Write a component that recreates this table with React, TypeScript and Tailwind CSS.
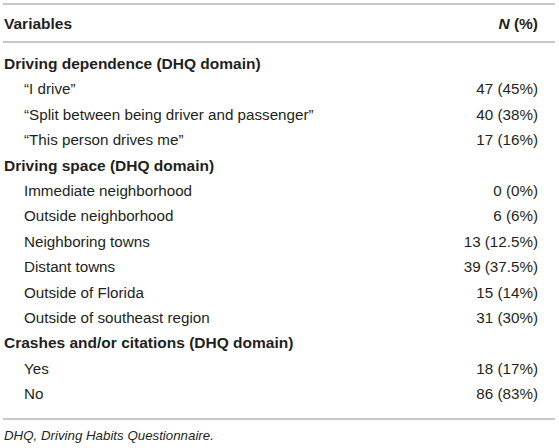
const groups = [
  {
    title: "Driving dependence (DHQ domain)",
    rows: [
      ["\u201cI drive\u201d", "47 (45%)"],
      ["\u201cSplit between being driver and passenger\u201d", "40 (38%)"],
      ["\u201cThis person drives me\u201d", "17 (16%)"],
    ],
  },
  {
    title: "Driving space (DHQ domain)",
    rows: [
      ["Immediate neighborhood", "0 (0%)"],
      ["Outside neighborhood", "6 (6%)"],
      ["Neighboring towns", "13 (12.5%)"],
      ["Distant towns", "39 (37.5%)"],
      ["Outside of Florida", "15 (14%)"],
      ["Outside of southeast region", "31 (30%)"],
    ],
  },
  {
    title: "Crashes and/or citations (DHQ domain)",
    rows: [
      ["Yes", "18 (17%)"],
      ["No", "86 (83%)"],
    ],
  },
];

export default function App() {
  return (
    <div className="w-[559px] h-[448px] bg-white pl-[3px] pr-[4px] pt-[3px] text-[#231f20] font-['Liberation_Sans',Arial,sans-serif]">
      <div className="border-t-2 border-b-2 border-[#c8c8c8]">
        {/* header */}
        <div className="flex items-center justify-between h-[38px] pt-[2px] pl-[1px] pr-[17px] border-b-2 border-[#c8c8c8] text-[15.5px] font-bold">
          <span>Variables</span>
          <span>
            <i>N</i> (%)
          </span>
        </div>

        <div className="pt-[8px] pb-[12px]">
          {groups.map((g) => (
            <div key={g.title}>
              <div className="h-[25.4px] leading-[25.4px] pl-[1px] text-[15.5px] font-bold">{g.title}</div>
              {g.rows.map(([label, n]) => (
                <div key={label} className="flex justify-between h-[25.4px] leading-[25.4px] pl-[21px] pr-[17px] text-[15.2px]">
                  <span>{label}</span>
                  <span>{n}</span>
                </div>
              ))}
            </div>
          ))}
        </div>
      </div>
      <p className="pl-[1px] mt-[6px] text-[13.3px] italic">DHQ, Driving Habits Questionnaire.</p>
    </div>
  );
}
